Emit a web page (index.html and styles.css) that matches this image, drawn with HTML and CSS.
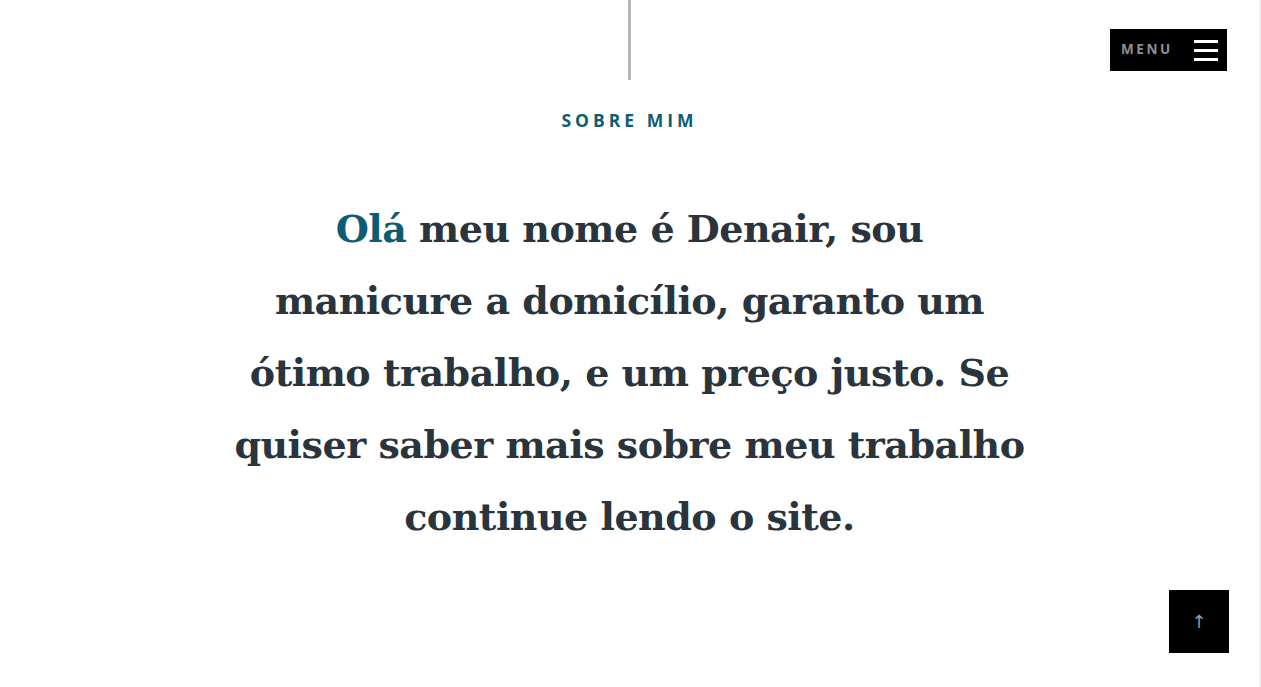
FILE: index.html
```html
<!DOCTYPE html>
<html lang="pt">
<head>
<meta charset="utf-8">
<title>Sobre mim</title>
<link rel="stylesheet" href="styles.css">
</head>
<body>
<div class="page">
  <main class="content">
    <div class="divider"></div>
    <h2 class="label">SOBRE MIM</h2>
    <p class="intro"><span class="hi">Olá</span> meu nome é Denair, sou manicure a domicílio, garanto um ótimo trabalho, e um preço justo. Se quiser saber mais sobre meu trabalho continue lendo o site.</p>
  </main>
  <div class="edge"></div>
</div>
<button class="menu" type="button">
  <span class="menu-text">MENU</span>
  <span class="burger"><i></i><i></i><i></i></span>
</button>
<button class="top" type="button">&#8593;</button>
</body>
</html>
```
FILE: styles.css
```css
html, body {
  margin: 0;
  padding: 0;
  background: #fff;
}
.page {
  display: flex;
  height: 687px;
}
.content {
  flex: 1;
  display: flex;
  flex-direction: column;
  align-items: center;
}
.edge {
  width: 2px;
  background: #efefef;
}
.divider {
  width: 3px;
  height: 80px;
  background: #b4b8bc;
  margin-left: -1px;
}
.label {
  margin: 30px 0 0;
  font-family: "Open Sans", sans-serif;
  font-weight: 700;
  font-size: 17.5px;
  letter-spacing: 4px;
  color: #0e5c74;
  line-height: 20px;
  padding-left: 0;
}
.intro {
  margin: 63px 0 0;
  width: 792px;
  text-align: center;
  font-family: "DejaVu Serif", serif;
  font-weight: 700;
  font-size: 38px;
  line-height: 72px;
  color: #29343d;
  letter-spacing: -0.5px;
}
.hi {
  color: #0e5c74;
}
.menu {
  position: absolute;
  top: 29px;
  left: 1110px;
  width: 117px;
  height: 42px;
  background: #000;
  border: 0;
  padding: 0 9px 0 11px;
  display: flex;
  align-items: center;
  justify-content: space-between;
  cursor: pointer;
}
.menu-text {
  font-family: "Open Sans", sans-serif;
  font-weight: 700;
  font-size: 13.5px;
  letter-spacing: 2.6px;
  color: #8d9094;
  margin-top: -2px;
}
.burger {
  display: flex;
  flex-direction: column;
  gap: 6px;
  width: 24px;
}
.burger i {
  display: block;
  height: 3px;
  background: #fff;
}
.top {
  position: absolute;
  left: 1169px;
  top: 590px;
  width: 60px;
  height: 63px;
  background: #000;
  border: 0;
  color: #9a9ea3;
  font-family: "DejaVu Sans", sans-serif;
  font-size: 18px;
  padding: 0;
  cursor: pointer;
}
```
